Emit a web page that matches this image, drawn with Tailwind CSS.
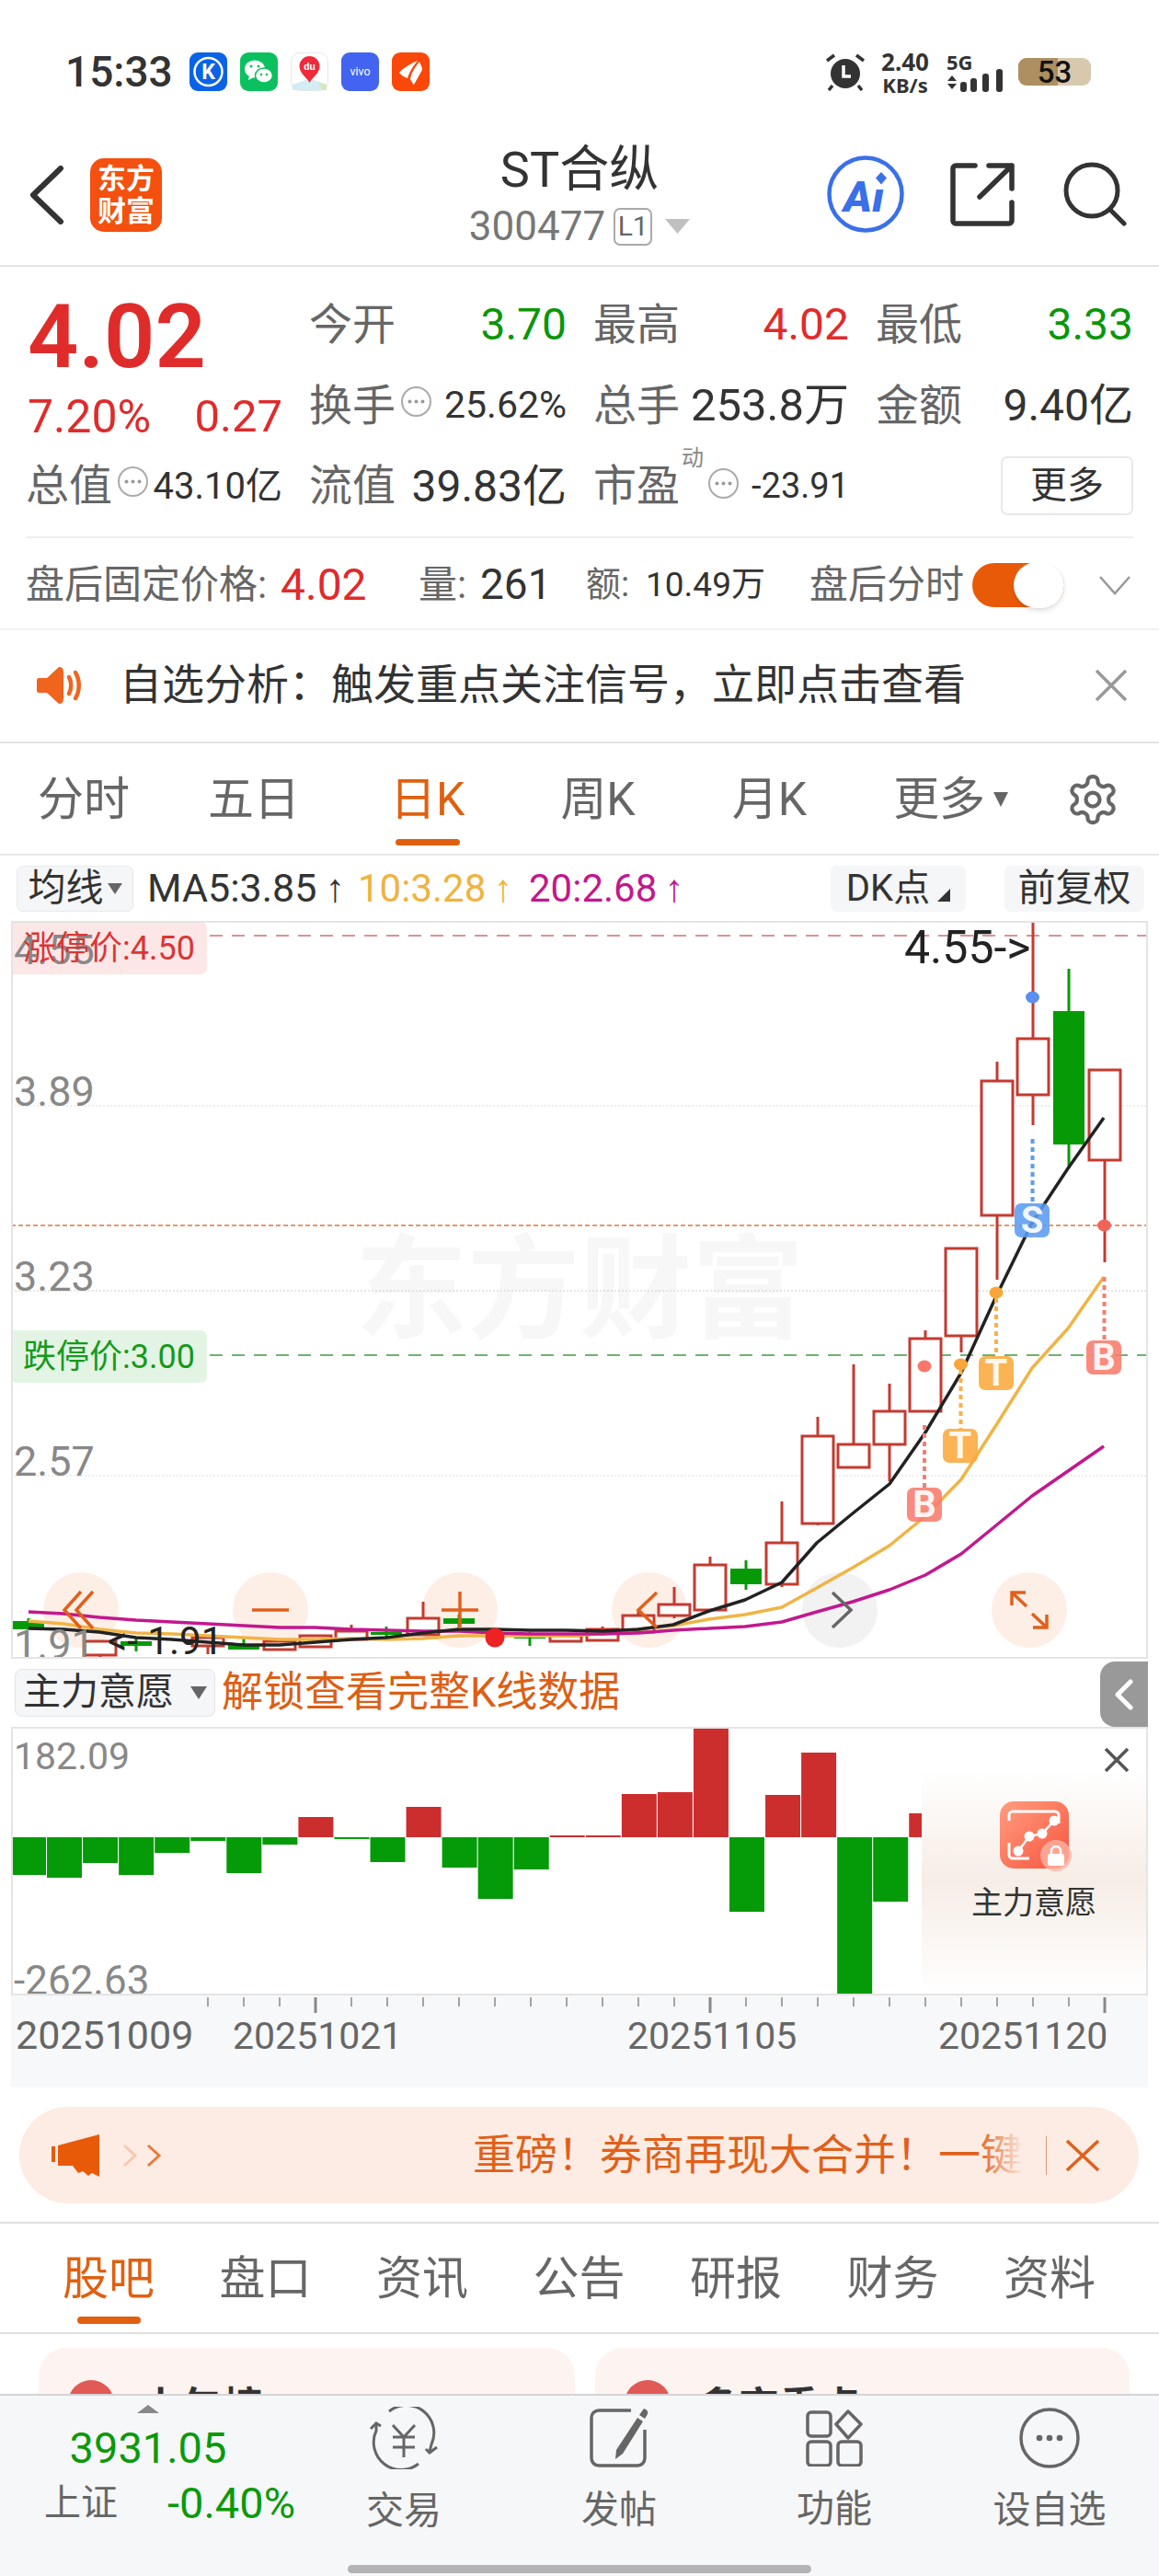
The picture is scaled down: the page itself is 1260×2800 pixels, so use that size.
<!DOCTYPE html>
<html lang="zh-CN">
<head>
    <meta charset="UTF-8">
    <meta name="viewport" content="width=device-width, initial-scale=1.0">
    <title>ST合纵 300477</title>
    <script src="https://cdn.jsdelivr.net/npm/@tailwindcss/browser@4"></script>
</head>
<body class="bg-white w-[1260px] h-[2800px] overflow-hidden font-['Roboto','Noto_Sans_CJK_SC',sans-serif] text-[#333]">

    <!-- status bar -->
    <div class="h-[156px] flex items-center pl-[71px]">
        <span class="text-[46px] font-medium text-[#333] w-[135px]">15:33</span>
        <div class="flex gap-[14px]">
            <svg class="w-[41px] h-[42px]" viewBox="0 0 41 42"><rect width="41" height="42" rx="9" fill="#0a63e6"/><circle cx="20.5" cy="21" r="15" fill="none" stroke="#fff" stroke-width="2.5"/><text x="20.5" y="29" text-anchor="middle" font-size="23" font-weight="700" fill="#fff">K</text></svg>
            <svg class="w-[41px] h-[42px]" viewBox="0 0 41 42"><rect width="41" height="42" rx="9" fill="#0bc15f"/><ellipse cx="16" cy="18" rx="11" ry="9.5" fill="#fff"/><path d="M10 25l-1 5 6-3z" fill="#fff"/><ellipse cx="26" cy="25" rx="9.5" ry="8" fill="#fff" stroke="#0bc15f" stroke-width="1.5"/><circle cx="12" cy="15" r="1.5" fill="#0bc15f"/><circle cx="20" cy="15" r="1.5" fill="#0bc15f"/><circle cx="23" cy="24" r="1.3" fill="#0bc15f"/><circle cx="29" cy="24" r="1.3" fill="#0bc15f"/></svg>
            <svg class="w-[41px] h-[42px]" viewBox="0 0 41 42"><rect x=".5" y=".5" width="40" height="41" rx="9" fill="#fff" stroke="#e8e8e8"/><path d="M2 41l0-6 14-5h9l14 5 0 6z" fill="#d4ecf4"/><path d="M30 32l9 3v6h-5z" fill="#d5e8c0"/><path d="M20.5 33c-2-5-11-10-11-18a11 11 0 0 1 22 0c0 8-9 13-11 18z" fill="#ee2b3a"/><text x="20.5" y="19" text-anchor="middle" font-size="11" font-weight="700" fill="#fff">du</text></svg>
            <svg class="w-[41px] h-[42px]" viewBox="0 0 41 42"><rect width="41" height="42" rx="9" fill="#4364f0"/><text x="20.5" y="25" text-anchor="middle" font-size="12.5" fill="#fff">vivo</text></svg>
            <svg class="w-[41px] h-[42px]" viewBox="0 0 41 42"><rect width="41" height="42" rx="9" fill="#f9480a"/><path d="M8 22c3-4 12-10 20-13-4 5-8 10-11 19-3-1-7-3-9-6z" fill="#fff"/><path d="M20 29c1-7 6-14 10-19 1 3 3 5 3 9-3 5-6 11-9 16-2-2-3-4-4-6z" fill="#fff"/></svg>
        </div>
        <svg class="w-[44px] h-[42px] ml-[430px]" viewBox="0 0 44 42"><circle cx="22" cy="23" r="16" fill="#333"/><path d="M2 9l8-6M42 9l-8-6M8 36l-4 5M36 36l4 5" stroke="#333" stroke-width="3.5" fill="none"/><path d="M20 14v12h8" stroke="#fff" stroke-width="3.5" fill="none"/></svg>
        <div class="flex flex-col items-center w-[60px] ml-[13px] font-['Noto_Sans',sans-serif] font-bold leading-none">
            <span class="text-[26px]">2.40</span>
            <span class="text-[22px] mt-[1px]">KB/s</span>
        </div>
        <div class="flex flex-col ml-[15px] w-[66px]">
            <span class="text-[22px] font-bold leading-none font-['Noto_Sans',sans-serif]">5G</span>
            <svg class="w-[66px] h-[26px] -mt-[3px]" viewBox="0 0 66 26"><path d="M1 13l5-6 5 6zM1 16l5 6 5-6z" fill="#333"/><rect x="15" y="14" width="7" height="11" rx="3" fill="#333"/><rect x="26" y="10" width="7" height="15" rx="3" fill="#333"/><rect x="39" y="5" width="7" height="20" rx="3" fill="#333"/><rect x="54" y="0" width="7" height="25" rx="3" fill="#333"/></svg>
        </div>
        <div class="w-[79px] h-[30px] ml-[12px] rounded-[9px] bg-[#d8c8ae] overflow-hidden relative flex items-center justify-center">
            <div class="absolute left-0 top-0 bottom-0 w-[43px] bg-[#ad8f62]"></div>
            <span class="relative text-[33px] font-medium text-[#111] leading-none">53</span>
        </div>
    </div>

    <!-- header -->
    <div class="h-[134px] border-b-2 border-[#e4e4e4] grid grid-cols-[1fr_auto_1fr] items-start">
        <div class="flex items-center pt-[16px] pl-[32px]">
            <svg class="w-[38px] h-[64px]" viewBox="0 0 38 64"><path d="M34 3L4 32l30 29" fill="none" stroke="#333" stroke-width="6" stroke-linecap="round" stroke-linejoin="round"/></svg>
            <div class="ml-[28px] w-[78px] h-[80px] rounded-[15px] bg-[#f4500f] text-white text-[31px] font-bold leading-[35px] flex flex-col items-center justify-center">
                <span>东方</span><span>财富</span>
            </div>
        </div>
        <div class="flex flex-col items-center">
            <span class="text-[54px] leading-[60px] text-[#333] mt-[-1px]">ST合纵</span>
            <div class="flex items-center mt-[3px] text-[#777]">
                <span class="text-[44px] leading-[56px]">300477</span>
                <span class="ml-[9px] w-[42px] h-[41px] rounded-[7px] border-2 border-[#aaa] text-[30px] leading-none flex items-center justify-center text-[#666]">L1</span>
                <svg class="w-[27px] h-[16px] ml-[14px]" viewBox="0 0 27 16"><path d="M0 0h27L13.5 16z" fill="#c0c0c0"/></svg>
            </div>
        </div>
        <div class="flex items-center justify-end pr-[34px] pt-[13px]">
            <svg class="w-[84px] h-[84px]" viewBox="0 0 84 84"><circle cx="42" cy="42" r="39.5" fill="#fff" stroke="#3a70e8" stroke-width="4.5"/><text x="40" y="61" text-anchor="middle" font-size="47" font-weight="900" font-style="italic" fill="#3a70e8">Aı</text><path d="M59 18l6 6.5-6 7-6-7z" fill="#3a70e8"/></svg>
            <svg class="w-[70px] h-[70px] ml-[50px]" viewBox="0 0 70 70"><path d="M27 4H6a3 3 0 0 0-3 3v57a3 3 0 0 0 3 3h58a3 3 0 0 0 3-3V44M42 4h25v25M67 4L32 38" fill="none" stroke="#333" stroke-width="5.5" stroke-linecap="round" stroke-linejoin="round"/></svg>
            <svg class="w-[70px] h-[70px] ml-[53px]" viewBox="0 0 70 70"><circle cx="31" cy="31" r="28" fill="none" stroke="#333" stroke-width="5"/><path d="M51 52l15 15" stroke="#333" stroke-width="5" stroke-linecap="round"/></svg>
        </div>
    </div>

    <!-- quote grid -->
    <div class="grid grid-cols-[279px_280px_278px_280px] grid-rows-[88px_88px_87px] gap-x-[29px] pl-[28px] pt-[19px] text-[47px] text-[#666]">
        <div class="row-span-2 text-[#e02b2b] pl-[2px]">
            <div class="text-[97px] leading-[100px] font-semibold mt-[7px]">4.02</div>
            <div class="flex justify-between text-[50px] leading-[74px]"><span>7.20%</span><span class="text-[49px]">0.27</span></div>
        </div>
        <div class="flex items-center justify-between"><span>今开</span><span class="text-[#0a960a] text-[48px]">3.70</span></div>
        <div class="flex items-center justify-between"><span>最高</span><span class="text-[#e02b2b] text-[48px]">4.02</span></div>
        <div class="flex items-center justify-between"><span>最低</span><span class="text-[#0a960a] text-[48px]">3.33</span></div>

        <div class="flex items-center"><span>换手</span>
            <svg class="w-[35px] h-[35px] ml-[5px] -mt-[10px]" viewBox="0 0 35 35"><circle cx="17.5" cy="17.5" r="15.5" fill="none" stroke="#aaa" stroke-width="2"/><circle cx="10.5" cy="17.5" r="2" fill="#999"/><circle cx="17.5" cy="17.5" r="2" fill="#999"/><circle cx="24.5" cy="17.5" r="2" fill="#999"/></svg>
            <span class="ml-auto text-[41px] text-[#333]">25.62%</span></div>
        <div class="flex items-center justify-between"><span>总手</span><span class="text-[49px] text-[#333]">253.8万</span></div>
        <div class="flex items-center justify-between"><span>金额</span><span class="text-[48px] text-[#333]">9.40亿</span></div>

        <div class="flex items-center"><span>总值</span>
            <svg class="w-[35px] h-[35px] ml-[5px] -mt-[10px]" viewBox="0 0 35 35"><circle cx="17.5" cy="17.5" r="15.5" fill="none" stroke="#aaa" stroke-width="2"/><circle cx="10.5" cy="17.5" r="2" fill="#999"/><circle cx="17.5" cy="17.5" r="2" fill="#999"/><circle cx="24.5" cy="17.5" r="2" fill="#999"/></svg>
            <span class="ml-auto text-[40px] text-[#333]">43.10亿</span></div>
        <div class="flex items-center justify-between"><span>流值</span><span class="text-[48px] text-[#333]">39.83亿</span></div>
        <div class="flex items-center relative"><span>市盈</span>
            <span class="absolute left-[96px] top-[1px] text-[24px] text-[#888] leading-none">动</span>
            <svg class="w-[35px] h-[35px] ml-[30px] -mt-[6px]" viewBox="0 0 35 35"><circle cx="17.5" cy="17.5" r="15.5" fill="none" stroke="#aaa" stroke-width="2"/><circle cx="10.5" cy="17.5" r="2" fill="#999"/><circle cx="17.5" cy="17.5" r="2" fill="#999"/><circle cx="24.5" cy="17.5" r="2" fill="#999"/></svg>
            <span class="ml-auto text-[38px] text-[#333]">-23.91</span></div>
        <div class="flex items-center justify-end -mt-[2px]"><span class="w-[144px] h-[64px] rounded-[7px] border-2 border-[#e8e8e8] text-[40px] text-[#333] flex items-center justify-center">更多</span></div>
    </div>

    <!-- after hours -->
    <div class="mx-[28px] mt-[11px] border-t-2 border-[#eeeeee]"></div>
    <div class="h-[98px] flex items-center pl-[28px] pt-[3px] text-[#666] text-[42px]">
        <span class="w-[277px] whitespace-nowrap">盘后固定价格:</span>
        <span class="text-[#e02b2b] text-[48px] w-[150px]">4.02</span>
        <span class="w-[67px]">量:</span>
        <span class="text-[#333] text-[46px] w-[115px]">261</span>
        <span class="text-[38px] w-[65px]">额:</span>
        <span class="text-[#333] text-[37px] w-[178px] whitespace-nowrap">10.49万</span>
        <span class="w-[177px] whitespace-nowrap">盘后分时</span>
        <div class="relative w-[100px] h-[48px] rounded-full bg-[#e85a08]">
            <div class="absolute right-0 -top-[1px] w-[55px] h-[50px] rounded-full bg-white shadow-md"></div>
        </div>
        <svg class="w-[36px] h-[22px] ml-[37px]" viewBox="0 0 36 22"><path d="M2 2l16 18L34 2" fill="none" stroke="#999" stroke-width="2.5"/></svg>
    </div>

    <!-- notice -->
    <div class="h-[123px] border-t-2 border-[#f0f0f0] flex items-center pl-[40px] pb-[2px]">
        <svg class="w-[52px] h-[42px]" viewBox="0 0 52 42"><path d="M2 13h9L24 1c4 0 5 2 5 6v28c0 4-1 6-5 6L11 29H2c-1 0-2-1-2-2V15c0-1 1-2 2-2z" fill="#f0641e"/><path d="M35 12c3 5 3 13 0 18M42 7c5 8 5 20 0 28" fill="none" stroke="#f0641e" stroke-width="4.5" stroke-linecap="round"/></svg>
        <span class="ml-[38px] text-[46px] text-[#333] whitespace-nowrap">自选分析：触发重点关注信号，立即点击查看</span>
        <svg class="w-[36px] h-[36px] ml-[140px]" viewBox="0 0 36 36"><path d="M2 2l32 32M34 2L2 34" stroke="#999" stroke-width="3.5" fill="none"/></svg>
    </div>

    <!-- period tabs -->
    <div class="h-[122px] border-t-2 border-[#e2e2e2] flex items-center text-[50px] text-[#666] relative pt-[2px]">
        <span class="ml-[41px]">分时</span>
        <span class="ml-[85px]">五日</span>
        <span class="ml-[98px] text-[#e0600f]">日K</span>
        <span class="ml-[104px]">周K</span>
        <span class="ml-[105px]">月K</span>
        <span class="ml-[94px]">更多</span>
        <svg class="w-[16px] h-[20px] ml-[9px]" viewBox="0 0 16 20"><path d="M0 2h16L8 18z" fill="#666"/></svg>
        <svg class="w-[60px] h-[60px] ml-[62px]" viewBox="0 0 24 24" fill="none" stroke="#666" stroke-width="1.7" stroke-linejoin="round"><path d="M12.22 2h-.44a2 2 0 0 0-2 2v.18a2 2 0 0 1-1 1.73l-.43.25a2 2 0 0 1-2 0l-.15-.08a2 2 0 0 0-2.73.73l-.22.38a2 2 0 0 0 .73 2.73l.15.1a2 2 0 0 1 1 1.72v.51a2 2 0 0 1-1 1.74l-.15.09a2 2 0 0 0-.73 2.73l.22.38a2 2 0 0 0 2.73.73l.15-.08a2 2 0 0 1 2 0l.43.25a2 2 0 0 1 1 1.73V20a2 2 0 0 0 2 2h.44a2 2 0 0 0 2-2v-.18a2 2 0 0 1 1-1.73l.43-.25a2 2 0 0 1 2 0l.15.08a2 2 0 0 0 2.73-.73l.22-.39a2 2 0 0 0-.73-2.73l-.15-.08a2 2 0 0 1-1-1.74v-.5a2 2 0 0 1 1-1.74l.15-.09a2 2 0 0 0 .73-2.73l-.22-.38a2 2 0 0 0-2.73-.73l-.15.08a2 2 0 0 1-2 0l-.43-.25a2 2 0 0 1-1-1.73V4a2 2 0 0 0-2-2z"/><circle cx="12" cy="12" r="3"/></svg>
        <div class="absolute left-[430px] bottom-[9px] w-[70px] h-[7px] rounded-full bg-[#e0600f]"></div>
    </div>

    <!-- chart toolbar -->
    <div class="h-[73px] border-t-2 border-[#e8e8e8] flex items-center text-[42px]">
        <div class="ml-[18px] w-[127px] h-[50px] rounded-[7px] bg-[#f5f6f8] border border-[#e8e9ec] flex items-center justify-center gap-[4px] text-[41px] text-[#333]"><span>均线</span><svg class="w-[16px] h-[12px]" viewBox="0 0 16 12"><path d="M0 0h16L8 12z" fill="#666"/></svg></div>
        <span class="ml-[15px] w-[229px] whitespace-nowrap text-[#333] text-[43px]">MA5:3.85<span class="ml-[9px] font-['Liberation_Sans',sans-serif]">↑</span></span>
        <span class="w-[186px] whitespace-nowrap text-[#efb33f]">10:3.28<span class="ml-[8px] font-['Liberation_Sans',sans-serif]">↑</span></span>
        <span class="w-[328px] whitespace-nowrap text-[#c2188e]">20:2.68<span class="ml-[8px] font-['Liberation_Sans',sans-serif]">↑</span></span>
        <div class="w-[147px] h-[50px] rounded-[7px] bg-[#f5f6f8] flex items-center justify-center gap-[8px] text-[40px] text-[#333] relative"><span>DK点</span><svg class="w-[14px] h-[14px] mt-[14px]" viewBox="0 0 14 14"><path d="M14 0v14H0z" fill="#333"/></svg></div>
        <div class="ml-[42px] w-[152px] h-[50px] rounded-[7px] bg-[#f5f6f8] flex items-center justify-center text-[41px] text-[#333]">前复权</div>
    </div>

    <!-- k line chart -->
    <div class="relative ml-[12px] w-[1236px] h-[802px] border-2 border-[#e4e4e4] overflow-hidden">
        <span class="absolute left-[372px] top-[339px] text-[122px] leading-[122px] font-bold text-[#f7f7f7] whitespace-nowrap">东方财富</span>
        <svg id="kline" class="absolute -left-[2px] -top-[2px] w-[1236px] h-[802px]" viewBox="12 1000 1236 802"></svg>
        <div class="absolute -left-[2px] -top-[1px] w-[213px] h-[57px] text-[#d93636] text-[36px] flex items-center justify-center whitespace-nowrap">涨停价:4.50</div>
        <div class="absolute -left-[2px] top-[443px] w-[213px] h-[57px] rounded-r-[7px] rounded-bl-[7px] bg-[#e3f4e4] text-[#159a1a] text-[36px] flex items-center justify-center whitespace-nowrap">跌停价:3.00</div>
    </div>

    <!-- indicator selector -->
    <div class="h-[74px] flex items-center relative">
        <div class="ml-[16px] w-[218px] h-[52px] rounded-[8px] bg-[#f5f6f8] border border-[#e2e4e8] flex items-center pl-[8px] text-[41px] text-[#333] whitespace-nowrap">主力意愿<svg class="w-[18px] h-[14px] ml-[18px]" viewBox="0 0 18 14"><path d="M0 0h18L9 14z" fill="#666"/></svg></div>
        <span class="ml-[7px] text-[45px] text-[#dd5f15] whitespace-nowrap">解锁查看完整K线数据</span>
        <div class="absolute left-[1196px] top-[3px] w-[52px] h-[71px] rounded-l-[16px] bg-[#999] flex items-center justify-center">
            <svg class="w-[20px] h-[34px]" viewBox="0 0 20 34"><path d="M17 3L3 17l14 14" fill="none" stroke="#fff" stroke-width="5" stroke-linecap="round" stroke-linejoin="round"/></svg>
        </div>
    </div>

    <!-- indicator chart -->
    <div class="relative ml-[12px] w-[1236px] h-[292px] border-2 border-[#e4e4e4] overflow-hidden">
        <svg id="bars" class="absolute -left-[2px] -top-[2px] w-[1236px] h-[292px]" viewBox="12 1876 1236 292"></svg>
        <div class="absolute left-[988px] top-[44px] right-0 bottom-0 bg-linear-to-b from-white via-[#f6ede6] to-white flex flex-col items-center">
            <div class="relative mt-[35px] w-[75px] h-[73px] rounded-[15px] bg-linear-to-br from-[#ff9c80] to-[#f6503c] flex items-center justify-center">
                <svg class="w-[62px] h-[60px]" viewBox="0 0 62 60" fill="none" stroke="#fff" stroke-width="3"><path d="M4 14V8a4 4 0 0 1 4-4h46a4 4 0 0 1 4 4v9M4 38v13a4 4 0 0 0 4 4h18"/><path d="M14 47l12-16 14-3 13-14" stroke-width="2.5"/><circle cx="14" cy="47" r="4" fill="#fff"/><circle cx="26" cy="31" r="4" fill="#fff"/><circle cx="40" cy="28" r="4" fill="#fff"/><circle cx="53" cy="14" r="4" fill="#fff"/></svg>
                <div class="absolute -right-[3px] -bottom-[3px] w-[34px] h-[34px] rounded-full bg-[#ffb3a3]/80 flex items-center justify-center">
                    <svg class="w-[20px] h-[22px]" viewBox="0 0 20 22"><rect x="1" y="9" width="18" height="13" rx="2.5" fill="#fff"/><path d="M5 10V6a5 5 0 0 1 10 0v4" fill="none" stroke="#fff" stroke-width="2.5"/></svg>
                </div>
            </div>
            <span class="mt-[15px] text-[34px] leading-[44px] text-[#333] whitespace-nowrap">主力意愿</span>
        </div>
        <svg class="absolute left-[1186px] top-[20px] w-[28px] h-[28px]" viewBox="0 0 28 28"><path d="M2 2l24 24M26 2L2 26" stroke="#555" stroke-width="3.5" fill="none"/></svg>
    </div>

    <!-- date axis -->
    <svg id="axis" class="block ml-[12px] w-[1236px] h-[100px] bg-[#f7f8fa]" viewBox="12 2168 1236 100"></svg>

    <!-- banner -->
    <div class="mx-[21px] mt-[21px] h-[105px] w-[1217px] rounded-full bg-[#fcece4] flex items-center">
        <svg class="w-[52px] h-[46px] ml-[35px]" viewBox="0 0 52 46"><rect x="0" y="13" width="4" height="17" fill="#e85a08"/><path d="M7 12L52 0v46l-8-4-4 3-6-5-5 2-6-8H7z" fill="#e85a08"/></svg>
        <svg class="w-[50px] h-[26px] ml-[25px]" viewBox="0 0 50 26"><path d="M2 2l12 11L2 24" fill="none" stroke="#f8c8ac" stroke-width="3"/><path d="M28 2l12 11-12 11" fill="none" stroke="#ea7a3a" stroke-width="3"/></svg>
        <div class="relative ml-[331px] w-[599px] overflow-hidden whitespace-nowrap text-[46px] text-[#e0601a]">重磅！券商再现大合并！一键通查
            <div class="absolute right-0 top-0 bottom-0 w-[50px] bg-linear-to-r from-transparent to-[#fcece4]"></div>
        </div>
        <div class="w-px h-[42px] bg-[#d99a78] ml-[24px]"></div>
        <svg class="w-[38px] h-[36px] ml-[20px]" viewBox="0 0 38 36"><path d="M2 2l34 32M36 2L2 34" stroke="#e0601a" stroke-width="3.5" fill="none"/></svg>
    </div>

    <!-- section tabs -->
    <div class="mt-[20px] h-[122px] border-t-2 border-b-2 border-[#e0e0e0] flex items-center justify-between pl-[68px] pr-[69px] pt-[3px] text-[50px] text-[#666] relative">
        <span class="text-[#e0600f]">股吧</span>
        <span>盘口</span>
        <span>资讯</span>
        <span>公告</span>
        <span>研报</span>
        <span>财务</span>
        <span>资料</span>
        <div class="absolute left-[84px] bottom-[9px] w-[69px] h-[8px] rounded-full bg-[#e0600f]"></div>
    </div>

    <!-- cards, cut off by the footer -->
    <div class="h-[65px] overflow-hidden flex gap-[22px] pl-[42px] pt-[15px]">
        <div class="w-[583px] h-[120px] rounded-t-[30px] bg-[#fdf4f1] flex items-start pl-[32px] pt-[35px]">
            <div class="w-[50px] h-[50px] rounded-full bg-[#e05a56]"></div>
            <span class="ml-[30px] mt-[5px] text-[44px] leading-[50px] font-bold text-[#333]">上午榜</span>
        </div>
        <div class="w-[581px] h-[120px] rounded-t-[30px] bg-[#fdf4f1] flex items-start pl-[32px] pt-[35px]">
            <div class="w-[50px] h-[50px] rounded-full bg-[#e05a56]"></div>
            <span class="ml-[30px] mt-[5px] text-[44px] leading-[50px] font-bold text-[#333]">多空重点</span>
        </div>
    </div>

    <!-- footer -->
    <div class="h-[199px] bg-[#f6f7f9] border-t-2 border-[#d4d4d8] flex relative">
        <div class="w-[322px] flex flex-col items-center">
            <svg class="w-[24px] h-[9px] mt-[10px]" viewBox="0 0 24 9"><path d="M12 0l12 9H0z" fill="#888"/></svg>
            <span class="text-[47px] leading-[56px] text-[#0a9a0a] mt-[10px]">3931.05</span>
            <div class="flex items-center w-full pl-[48px] -mt-[3px]">
                <span class="text-[40px] text-[#666]">上证</span>
                <span class="ml-[54px] text-[47px] text-[#0a9a0a]">-0.40%</span>
            </div>
        </div>
        <div class="w-[234px] flex flex-col items-center text-[41px] text-[#666] pt-[12px]">
            <svg class="w-[76px] h-[68px]" viewBox="0 0 76 68" fill="none" stroke="#666" stroke-width="3"><path d="M22 5a30 30 0 0 1 46 36l-2 8M54 62A30 30 0 0 1 8 26l0-8"/><path d="M2 24l6-6 5 3M74 44l-8 6-4-4"/><path d="M26 20l12 13 12-13M38 33v22M26 33h24M26 44h24"/></svg>
            <span class="mt-[20px] leading-[50px]">交易</span>
        </div>
        <div class="w-[234px] flex flex-col items-center text-[41px] text-[#666] pt-[13px]">
            <svg class="w-[66px] h-[66px]" viewBox="0 0 66 66" fill="none" stroke="#666" stroke-width="3.5"><path d="M46 3H11a8 8 0 0 0-8 8v44a8 8 0 0 0 8 8h42a8 8 0 0 0 8-8V24"/><path d="M60 1c3 1 5 3 4 6l-3 5-6-4zM53 11l6 4-22 35-8 6 1-10z" fill="#666" stroke="none"/></svg>
            <span class="mt-[20px] leading-[50px]">发帖</span>
        </div>
        <div class="w-[234px] flex flex-col items-center text-[41px] text-[#666] pt-[15px]">
            <svg class="w-[62px] h-[62px]" viewBox="0 0 62 62" fill="none" stroke="#666" stroke-width="3.5"><rect x="2" y="3" width="25" height="26" rx="4"/><path d="M46 2l14 14-14 15-13-15z" stroke-linejoin="round"/><rect x="2" y="35" width="25" height="26" rx="4"/><rect x="35" y="35" width="25" height="26" rx="4"/></svg>
            <span class="mt-[21px] leading-[50px]">功能</span>
        </div>
        <div class="w-[234px] flex flex-col items-center text-[41px] text-[#666] pt-[13px]">
            <svg class="w-[66px] h-[66px]" viewBox="0 0 66 66"><circle cx="33" cy="33" r="31" fill="none" stroke="#666" stroke-width="3.5"/><circle cx="22" cy="33" r="3.3" fill="#666"/><circle cx="33" cy="33" r="3.3" fill="#666"/><circle cx="44" cy="33" r="3.3" fill="#666"/></svg>
            <span class="mt-[20px] leading-[50px] whitespace-nowrap">设自选</span>
        </div>
        <div class="absolute left-[378px] top-[184px] w-[504px] h-[9px] rounded-full bg-[#b4b4b6]"></div>
    </div>

    <script>
        const RED = '#c43a30', GREEN = '#069a06';

        // x, body top, body bottom, wick top, wick bottom, colour
        const candles = [
            [31, 1761, 1770, 1758, 1770, 'g'], [109, 1783, 1798, 1783, 1803, 'r'], [148, 1783, 1788, 1779, 1794, 'g'],
            [226, 1779, 1788, 1779, 1797, 'r'], [265, 1786, 1792, 1780, 1792, 'g'], [304, 1783, 1792, 1783, 1792, 'r'],
            [343, 1777, 1789, 1777, 1789, 'r'], [382, 1772, 1781, 1765, 1781, 'r'], [420, 1773, 1776, 1767, 1779, 'g'],
            [460, 1758, 1776, 1740, 1776, 'r'], [499, 1758, 1764, 1754, 1769, 'g'], [576, 1779, 1780, 1773, 1788, 'g'],
            [615, 1777, 1783, 1777, 1783, 'r'], [655, 1770, 1782, 1767, 1782, 'r'], [694, 1755, 1773, 1750, 1773, 'r'],
            [733, 1743, 1755, 1724, 1758, 'r'], [772, 1700, 1749, 1691, 1749, 'r'], [811, 1704, 1721, 1695, 1727, 'g'],
            [850, 1676, 1721, 1631, 1724, 'r'], [889, 1560, 1655, 1539, 1657, 'r'], [928, 1569, 1594, 1482, 1594, 'r'],
            [967, 1533, 1569, 1503, 1609, 'r'], [1006, 1454, 1533, 1445, 1533, 'r'], [1045, 1356, 1451, 1356, 1469, 'r'],
            [1084, 1174, 1320, 1153, 1390, 'r'], [1123, 1128, 1189, 1001, 1222, 'r'], [1162, 1098, 1243, 1052, 1269, 'g'],
            [1201, 1162, 1260, 1162, 1371, 'r']
        ];
        const xs = [31, 69, 108, 148, 187, 226, 265, 304, 343, 382, 420, 460, 499, 538, 576, 615, 655, 694, 732, 771, 810, 850, 888, 927, 967, 1006, 1045, 1083, 1122, 1161, 1200];
        const ma5 = [1769, 1770, 1773, 1779, 1781, 1784, 1787, 1787, 1784, 1781, 1779, 1774, 1770, 1770, 1771, 1771, 1772, 1770, 1765, 1750, 1738, 1719, 1676, 1644, 1612, 1556, 1491, 1408, 1328, 1269, 1214];
        const ma10 = [1761, 1764, 1770, 1774, 1775, 1777, 1779, 1781, 1781, 1780, 1781, 1780, 1777, 1777, 1777, 1777, 1775, 1770, 1766, 1759, 1754, 1746, 1725, 1703, 1679, 1647, 1607, 1548, 1486, 1443, 1387];
        const ma20 = [1751, 1753, 1757, 1760, 1762, 1764, 1766, 1768, 1768, 1770, 1771, 1772, 1772, 1774, 1775, 1775, 1775, 1774, 1771, 1769, 1767, 1762, 1751, 1740, 1727, 1711, 1688, 1657, 1625, 1598, 1571];

        const line = (ys, color) => `<polyline points="${ys.map((y, i) => xs[i] + ',' + y).join(' ')}" fill="none" stroke="${color}" stroke-width="3.5" stroke-linejoin="round"/>`;
        const hline = (y, color, dash, width) => `<line x1="12" x2="1248" y1="${y}" y2="${y}" stroke="${color}" stroke-width="${width}" stroke-dasharray="${dash}"/>`;
        const axisLabel = (y, text) => `<text x="15" y="${y}" font-size="45" fill="#888">${text}</text>`;
        const circle = (x, fill) => `<circle cx="${x}" cy="1749" r="41" fill="${fill}"/>`;
        const badge = (x, y, color, text) => `<rect x="${x}" y="${y}" width="38" height="37" rx="7" fill="${color}" fill-opacity=".88"/><text x="${x + 19}" y="${y + 32}" text-anchor="middle" font-size="40" font-weight="700" fill="#fff" fill-opacity=".92">${text}</text>`;
        const signal = (x, y1, y2, color) => `<line x1="${x}" x2="${x}" y1="${y1}" y2="${y2}" stroke="${color}" stroke-width="4" stroke-dasharray="5 4"/>`;
        const dot = (x, y, color) => `<ellipse cx="${x}" cy="${y}" rx="7.5" ry="6.5" fill="${color}"/>`;

        let k = '';
        k += hline(1201, '#ddd', '2 2', 1) + hline(1402, '#ccc', '2 2', 1) + hline(1603, '#ddd', '2 2', 1);
        k += hline(1016, '#cf7070', '14 10', 1.5) + hline(1331, '#e0743c', '5 3', 1.5) + hline(1472, '#3f9a3f', '14 10', 1.5);
        k += `<rect x="4" y="1001" width="221" height="57" rx="7" fill="#fde6e6"/>`;
        k += axisLabel(1047, '4.55') + axisLabel(1201, '3.89') + axisLabel(1402, '3.23') + axisLabel(1603, '2.57');
        k += circle(88, '#fdeee6') + circle(294, '#fdeee6') + circle(500, '#fdeee6') + circle(706, '#fdeee6') + circle(913, '#f2f2f2') + circle(1119, '#fdeee6');
        for (const [x, top, bottom, wickTop, wickBottom, c] of candles) {
            const color = c === 'g' ? GREEN : RED;
            k += `<line x1="${x}" x2="${x}" y1="${wickTop}" y2="${wickBottom}" stroke="${color}" stroke-width="3"/>`;
            k += c === 'g'
                ? `<rect x="${x - 17}" y="${top}" width="34" height="${bottom - top}" fill="${color}"/>`
                : `<rect x="${x - 17}" y="${top}" width="34" height="${bottom - top}" fill="#fff" stroke="${color}" stroke-width="3"/>`;
        }
        k += line(ma10, '#f0b445') + line(ma20, '#c2188e') + line(ma5, '#222');
        k += `<text x="15" y="1802" font-size="45" fill="#888">1.91</text>`;
        k += `<text x="117" y="1797" font-size="42" fill="#222">&lt;- 1.91</text>`;
        k += `<text x="983" y="1046" font-size="50" fill="#222">4.55-&gt;</text>`;
        k += `<circle cx="538" cy="1779" r="10.5" fill="#ee2222"/>`;
        // buy / sell / T markers
        k += signal(1122.5, 1237, 1307, '#5b9cf0') + dot(1122.5, 1083, '#5b8ff0') + badge(1103, 1307, '#5b9cf0', 'S');
        k += signal(1200.5, 1387, 1456, '#f47f72') + dot(1200.5, 1331, '#f4635a') + badge(1181, 1456, '#f87b6c', 'B');
        k += signal(1083, 1410, 1473, '#fbb04a') + dot(1083, 1404, '#f9a53a') + badge(1064, 1473, '#fca93c', 'T');
        k += signal(1044.5, 1488, 1552, '#fbb04a') + dot(1044.5, 1482, '#f9a53a') + badge(1025, 1552, '#fca93c', 'T');
        k += signal(1005, 1548, 1616, '#f47f72') + dot(1005, 1484, '#f8776c') + badge(986, 1616, '#f87b6c', 'B');
        // chart buttons
        const btn = 'fill="none" stroke="#e0601a" stroke-width="3.5"';
        k += `<path d="M88 1729l-18 20 18 20M101 1729l-18 20 18 20" ${btn}/>`;
        k += `<path d="M274 1749h40" ${btn}/>`;
        k += `<path d="M480 1749h40M500 1729v40" ${btn}/>`;
        k += `<path d="M714 1730l-20 19 20 19" ${btn}/>`;
        k += `<path d="M905 1730l20 19-20 19" fill="none" stroke="#666" stroke-width="3.5"/>`;
        k += `<path d="M1100 1744v-14h15M1100 1730l16 15M1138 1754v14h-15M1138 1768l-16-15" ${btn}/>`;
        document.getElementById('kline').innerHTML = k;

        // value of each bar: y where it ends; the zero line is at y=1996
        const ZERO = 1996;
        const ends = [2037, 2040, 2024, 2037, 2013, 2000, 2035, 2004, 1974, 1998, 2023, 1963, 2029, 2063, 2031, 1994, 1994, 1949, 1947, 1877, 2077, 1950, 1904, 2168, 2066, 1970];
        let b = `<text x="15" y="1922" font-size="41" fill="#888">182.09</text>`;
        ends.forEach((end, i) => {
            const x = 12 + i * 39.05, up = end < ZERO;
            b += `<rect x="${x}" y="${up ? end : ZERO}" width="38" height="${Math.abs(end - ZERO)}" fill="${up ? '#cc2e2e' : '#059a08'}"/>`;
        });
        b += `<text x="15" y="2167" font-size="44" fill="#888">-262.63</text>`;
        document.getElementById('bars').innerHTML = b;

        let a = '';
        for (let i = 5; i <= 30; i++) {
            const x = 31 + i * 39, major = i === 8 || i === 19 || i === 30;
            a += `<line x1="${x}" x2="${x}" y1="2170" y2="${major ? 2187 : 2180}" stroke="#888" stroke-width="${major ? 3 : 1.5}"/>`;
        }
        [[17, '20251009', 43], [253, '20251021', 41], [682, '20251105', 41], [1020, '20251120', 41]].forEach(([x, t, size]) => {
            a += `<text x="${x}" y="2226" font-size="${size}" fill="#666">${t}</text>`;
        });
        document.getElementById('axis').innerHTML = a;
    </script>
</body>
</html>
